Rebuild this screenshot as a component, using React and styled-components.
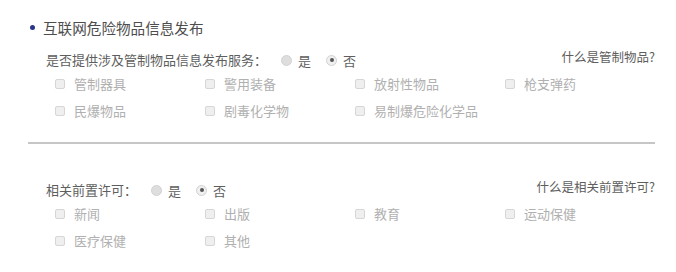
import React from 'react';
import styled, { createGlobalStyle } from 'styled-components';

const GlobalStyle = createGlobalStyle`
  body {
    margin: 0;
    background: #fff;
    font-family: "Microsoft YaHei", "Noto Sans CJK SC", "Noto Sans", sans-serif;
  }
`;

const sections = [
  {
    question: '是否提供涉及管制物品信息发布服务：',
    link: '什么是管制物品?',
    options: ['管制器具', '警用装备', '放射性物品', '枪支弹药', '民爆物品', '剧毒化学物', '易制爆危险化学品'],
  },
  {
    question: '相关前置许可：',
    link: '什么是相关前置许可?',
    options: ['新闻', '出版', '教育', '运动保健', '医疗保健', '其他'],
  },
];

const App = () => {
  return (
    <Page>
      <GlobalStyle />
      <Title>
        <Bullet />
        互联网危险物品信息发布
      </Title>
      {sections.map((section, i) => (
        <Section key={i} first={i === 0}>
          <QuestionRow>
            <Label>{section.question}</Label>
            <Radio />
            <RadioText>是</RadioText>
            <Radio checked />
            <RadioText>否</RadioText>
            <HelpLink>{section.link}</HelpLink>
          </QuestionRow>
          <Options>
            {section.options.map((opt) => (
              <Option key={opt}>
                <Box />
                {opt}
              </Option>
            ))}
          </Options>
          {i === 0 && <Divider />}
        </Section>
      ))}
    </Page>
  );
};

const Page = styled.div`
  width: 676px;
  height: 272px;
  box-sizing: border-box;
  padding: 17px 21px 0 28px;
  overflow: hidden;
`;

const Title = styled.div`
  display: flex;
  align-items: center;
  height: 20px;
  font-size: 14.6px;
  color: #4d4d4d;
`;

const Bullet = styled.span`
  width: 5px;
  height: 5px;
  border-radius: 50%;
  background: #2a3585;
  margin: 0 8px 0 2px;
`;

const Section = styled.div`
  padding-left: 18px;
  margin-top: ${(p) => (p.first ? '13px' : '36px')};
`;

const QuestionRow = styled.div`
  display: flex;
  align-items: center;
  height: 20px;
  font-size: 13px;
  color: #5e5e5e;
`;

const Label = styled.span`
  line-height: 20px;
  margin-right: 14px;
`;

const Radio = styled.span`
  width: 9px;
  height: 9px;
  border-radius: 50%;
  border: 1px solid #d2d2d2;
  background: ${(p) => (p.checked ? '#f0f0f0' : '#dedede')};
  box-sizing: content-box;
  display: flex;
  align-items: center;
  justify-content: center;
  &::after {
    content: '';
    width: 4px;
    height: 4px;
    border-radius: 50%;
    background: ${(p) => (p.checked ? '#555' : 'transparent')};
  }
`;

const RadioText = styled.span`
  margin: 0 15px 0 6px;
`;

const HelpLink = styled.span`
  margin-left: auto;
  align-self: flex-start;
  line-height: 14px;
  font-size: 12.5px;
  color: #5e5e5e;
`;

const Options = styled.div`
  display: grid;
  grid-template-columns: repeat(4, 150px);
  padding-left: 9px;
`;

const Option = styled.div`
  display: flex;
  align-items: center;
  height: 27px;
  font-size: 13px;
  color: #b0b0b0;
`;

const Box = styled.span`
  width: 8px;
  height: 8px;
  border: 1px solid #d6d6d6;
  border-radius: 2px;
  background: #efefef;
  margin-right: 9px;
`;

const Divider = styled.div`
  height: 2px;
  background: #c6c6c6;
  margin: 18px 0 0 -18px;
`;

export default App;
